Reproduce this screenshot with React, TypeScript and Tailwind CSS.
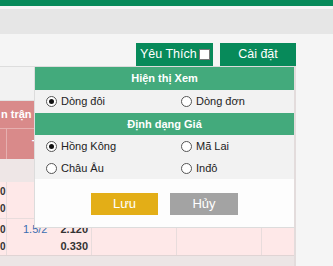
import React, { useState } from 'react';

const font = { fontFamily: '"Liberation Sans", Arial, sans-serif' };

const Radio: React.FC<{ checked: boolean; label: string; onClick: () => void }> = ({ checked, label, onClick }) => (
  <button onClick={onClick} className="flex items-center gap-[4px] text-[11px] text-[#222] leading-none">
    <span className="w-[11px] h-[11px] rounded-full border border-[#555] bg-white flex items-center justify-center">
      {checked && <span className="w-[5px] h-[5px] rounded-full bg-[#111]" />}
    </span>
    {label}
  </button>
);

const App: React.FC = () => {
  const [view, setView] = useState('double');
  const [odds, setOdds] = useState('hk');

  return (
    <div style={font} className="w-[333px] h-[266px] bg-[#f5f5f5] overflow-hidden flex flex-col">
      {/* top bars */}
      <div className="h-[7px] bg-[#078a5a]" />
      <div className="h-[3px]" />
      <div className="h-[27px] bg-[#e6e6e6]" />

      {/* toolbar */}
      <div className="flex justify-end gap-[7px] pt-[9px] pr-[37px]">
        <button className="h-[23px] w-[77px] bg-[#078a5a] text-white text-[12.5px] flex items-center pl-[4px] gap-[2px]">
          Yêu Thích
          <span className="w-[11px] h-[11px] bg-white border border-[#777]" />
        </button>
        <button className="h-[23px] w-[76px] bg-[#078a5a] text-white text-[12.5px] flex items-center justify-center">
          Cài đặt
        </button>
      </div>

      {/* table + settings popup */}
      <div className="relative w-[296px]">
        <div className="border-t border-[#ddd] border-r-2 border-r-[#e3dcdc] flex flex-col">
          <div className="h-[34px] bg-[#f2f2f2] border-b border-[#e2e2e2]" />
          <div className="bg-[#d98a8a] text-white font-bold text-[11px]">
            <div className="h-[28px] flex items-center pl-[1px] border-b border-[#e6b0b0]">n trận</div>
            <div className="h-[30px] grid grid-cols-[7px_85px_1fr]">
              <div className="border-r border-[#e6b0b0]" />
              <div className="flex items-center pl-[25px]">T</div>
            </div>
          </div>
          <div className="h-[23px] bg-[#eee6e6]" />
          <div className="h-[37px] bg-[#fee8e8] border-b border-[#e8dcdc] grid grid-cols-[7px_85px_85px_85px_1fr] text-[10px] font-bold text-[#333]">
            <div className="border-r border-[#e8dcdc] flex flex-col justify-center gap-[4px] items-start">
              <span className="leading-[13px]">0</span>
              <span className="leading-[13px]">0</span>
            </div>
            <div className="border-r border-[#e8dcdc]" />
            <div className="border-r border-[#e8dcdc]" />
            <div className="border-r border-[#e8dcdc]" />
            <div />
          </div>
          <div className="h-[37px] bg-[#fee8e8] border-b border-[#e0d4d4] grid grid-cols-[7px_85px_85px_85px_1fr] text-[11px] font-bold text-[#333]">
            <div className="border-r border-[#e8dcdc] flex flex-col justify-end pb-[2px] gap-[4px] items-start text-[10px]">
              <span className="leading-[13px]">0</span>
              <span className="leading-[13px]">0</span>
            </div>
            <div className="border-r border-[#e8dcdc] flex flex-col justify-end pb-[2px] gap-[4px] pr-[3px]">
              <div className="flex justify-end gap-[13px] leading-[13px]">
                <span className="font-normal text-[#3a6db0]">1.5/2</span>
                <span>2.120</span>
              </div>
              <div className="text-right leading-[13px]">0.330</div>
            </div>
            <div className="border-r border-[#e8dcdc]" />
            <div className="border-r border-[#e8dcdc]" />
            <div />
          </div>
          <div className="h-[10px] bg-[#ece5e5]" />
        </div>

        <div className="absolute left-[34px] top-0 w-[262px] h-[162px] border-l border-t border-b border-[#dcdcdc] border-r-2 border-r-[#e3dcdc] flex flex-col">
          <div className="h-[23px] bg-[#43aa7c] text-white font-bold text-[11px] flex items-center justify-center">
            Hiện thị Xem
          </div>
          <div className="h-[23px] bg-[#f2f2f2] grid grid-cols-[135px_1fr] items-center pl-[11px]">
            <Radio checked={view === 'double'} label="Dòng đôi" onClick={() => setView('double')} />
            <Radio checked={view === 'single'} label="Dòng đơn" onClick={() => setView('single')} />
          </div>
          <div className="h-[22px] bg-[#43aa7c] text-white font-bold text-[11px] flex items-center justify-center">
            Định dạng Giá
          </div>
          <div className="h-[44px] bg-[#f2f2f2] grid grid-cols-[135px_1fr] grid-rows-2 items-center pl-[11px]">
            <Radio checked={odds === 'hk'} label="Hồng Kông" onClick={() => setOdds('hk')} />
            <Radio checked={odds === 'my'} label="Mã Lai" onClick={() => setOdds('my')} />
            <Radio checked={odds === 'eu'} label="Châu Âu" onClick={() => setOdds('eu')} />
            <Radio checked={odds === 'id'} label="Inđô" onClick={() => setOdds('id')} />
          </div>
          <div className="flex-1 bg-[#fdfdfd] flex justify-center gap-[12px] pt-[14px]">
            <button className="h-[22px] w-[67px] bg-[#e3ae17] text-white text-[13px]">Lưu</button>
            <button className="h-[22px] w-[68px] bg-[#a3a3a3] text-white text-[13px]">Hủy</button>
          </div>
        </div>
      </div>
    </div>
  );
};

export default App;
